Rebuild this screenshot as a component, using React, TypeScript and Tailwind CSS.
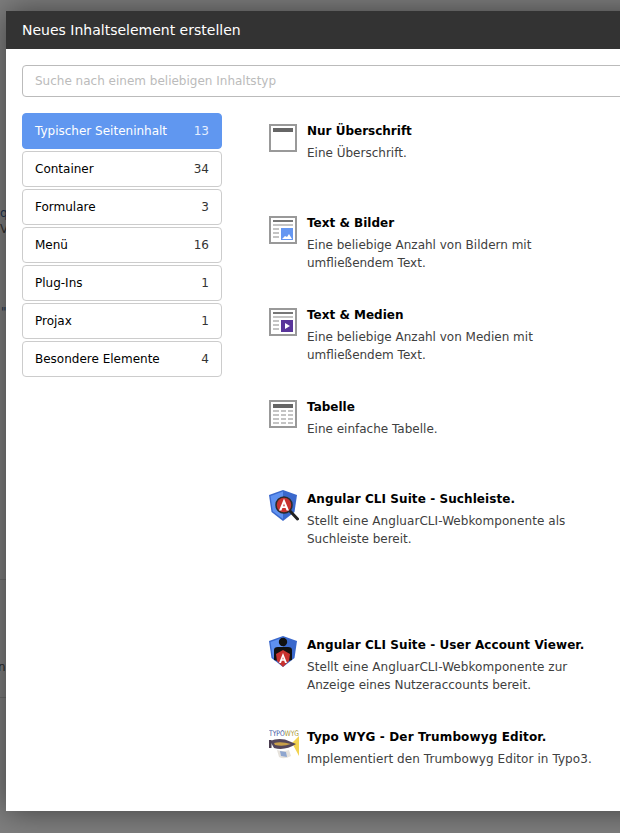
const CATEGORIES = [
  { label: 'Typischer Seiteninhalt', count: 13, active: true },
  { label: 'Container', count: 34 },
  { label: 'Formulare', count: 3 },
  { label: 'Menü', count: 16 },
  { label: 'Plug-Ins', count: 1 },
  { label: 'Projax', count: 1 },
  { label: 'Besondere Elemente', count: 4 },
];

function IconFrame({ children }: { children?: React.ReactNode }) {
  return (
    <svg width="28" height="28" viewBox="0 0 28 28" shapeRendering="crispEdges" className="mt-0.5">
      <rect x="1" y="1" width="26" height="26" fill="#fff" stroke="#999" strokeWidth="2" />
      {children}
    </svg>
  );
}

function HeaderIcon() {
  return (
    <IconFrame>
      <rect x="4" y="4" width="20" height="4" fill="#666" />
    </IconFrame>
  );
}

function TextLines() {
  return (
    <>
      <rect x="4" y="4" width="20" height="2" fill="#777" />
      <rect x="4" y="8" width="20" height="2" fill="#c4c4c4" />
      <rect x="4" y="12" width="6" height="2" fill="#c4c4c4" />
      <rect x="4" y="16" width="6" height="2" fill="#c4c4c4" />
      <rect x="4" y="20" width="6" height="2" fill="#c4c4c4" />
    </>
  );
}

function TextPicIcon() {
  return (
    <IconFrame>
      <TextLines />
      <rect x="12" y="12" width="12" height="12" fill="#6597f2" />
      <path d="M13 23l3-3 2 1 2-3 3 5z" fill="#fff" shapeRendering="auto" />
    </IconFrame>
  );
}

function TextMediaIcon() {
  return (
    <IconFrame>
      <TextLines />
      <rect x="12" y="12" width="12" height="12" fill="#59359a" />
      <path d="M16 15l5 3-5 3z" fill="#fff" shapeRendering="auto" />
    </IconFrame>
  );
}

function TableIcon() {
  return (
    <IconFrame>
      <rect x="4" y="4" width="20" height="4" fill="#666" />
      {[10, 14, 18, 22].map((y) => (
        <g key={y}>
          <rect x="4" y={y} width="6" height="2" fill="#c4c4c4" />
          <rect x="12" y={y} width="5" height="2" fill="#c4c4c4" />
          <rect x="19" y={y} width="5" height="2" fill="#c4c4c4" />
        </g>
      ))}
    </IconFrame>
  );
}

function AngularShield() {
  return (
    <>
      <path d="M14 0 L0 5 L2.5 22 L14 31 L25.5 22 L28 5 Z" fill="#3a68cc" />
      <path d="M14 1.5 L1.5 6 L3.8 21.3 L14 29 Z" fill="#5f91f0" />
    </>
  );
}

function AngularSearchIcon() {
  return (
    <svg width="30" height="33" viewBox="0 0 30 33">
      <AngularShield />
      <line x1="21" y1="21" x2="28.5" y2="29" stroke="#222" strokeWidth="3" strokeLinecap="round" />
      <circle cx="15" cy="15" r="8" fill="#c8322f" stroke="#2b2b2b" strokeWidth="1.5" />
      <path d="M15 8.5 L10 20.5 H12.4 L13.4 18 H16.6 L17.6 20.5 H20 Z M14.1 16.2 L15 13.5 L15.9 16.2 Z" fill="#fff" fillRule="evenodd" />
    </svg>
  );
}

function AngularUserIcon() {
  return (
    <svg width="30" height="33" viewBox="0 0 30 33">
      <AngularShield />
      <circle cx="14" cy="6" r="4.2" fill="#111" />
      <path d="M5 24 V14 Q5 11 9 11 H19 Q23 11 23 14 V24 L19 25 V18 H9 V25 Z" fill="#111" />
      <path d="M14 14 L7 18 L8 25 L14 31 L20 25 L21 18 Z" fill="#c8322f" />
      <path d="M14 17 L10 27 H12 L12.8 24.8 H15.2 L16 27 H18 Z M13.4 23.2 L14 21 L14.6 23.2 Z" fill="#fff" fillRule="evenodd" />
    </svg>
  );
}

function TrumbowygIcon() {
  return (
    <svg width="30" height="32" viewBox="0 0 30 32" className="mt-px">
      <path d="M23 14 L30 7 L30 27 Z" fill="#f2d34f" />
      <path d="M1 12 Q8 9 16 10.5 L27 15 Q16 22 5 19 Z" fill="#54465a" />
      <path d="M5 14 Q12 12 22 15 Q14 18 6 16 Z" fill="#c9a04a" />
      <rect x="0" y="11" width="2.5" height="8" fill="#4a3d50" />
      <path d="M8 21 Q14 23 20 21 L22 27 Q15 31 10 28 Z" fill="#e6e2dc" />
      <path d="M11 22 L17 23 L18 28 L12 27 Z" fill="#8fa6cf" />
      <text x="0" y="6.5" fontSize="7.6" fontFamily="'DejaVu Sans', sans-serif" textLength="30" lengthAdjust="spacingAndGlyphs">
        <tspan fill="#2f4a9a">TYPO</tspan>
        <tspan fill="#a8962e">WYG</tspan>
      </text>
    </svg>
  );
}

const ELEMENTS = [
  { title: 'Nur Überschrift', lines: ['Eine Überschrift.'], icon: <HeaderIcon />, h: 'h-[92px]' },
  {
    title: 'Text & Bilder',
    lines: ['Eine beliebige Anzahl von Bildern mit', 'umfließendem Text.'],
    icon: <TextPicIcon />,
    h: 'h-[92px]',
  },
  {
    title: 'Text & Medien',
    lines: ['Eine beliebige Anzahl von Medien mit', 'umfließendem Text.'],
    icon: <TextMediaIcon />,
    h: 'h-[92px]',
  },
  { title: 'Tabelle', lines: ['Eine einfache Tabelle.'], icon: <TableIcon />, h: 'h-[92px]' },
  {
    title: 'Angular CLI Suite - Suchleiste.',
    lines: ['Stellt eine AngluarCLI-Webkomponente als', 'Suchleiste bereit.'],
    icon: <AngularSearchIcon />,
    h: 'h-[146px]',
    wide: 'tracking-[0.08px]',
  },
  {
    title: 'Angular CLI Suite - User Account Viewer.',
    lines: ['Stellt eine AngluarCLI-Webkomponente zur', 'Anzeige eines Nutzeraccounts bereit.'],
    icon: <AngularUserIcon />,
    h: 'h-[92px]',
    wide: 'tracking-[0.08px]',
  },
  {
    title: 'Typo WYG - Der Trumbowyg Editor.',
    lines: ['Implementiert den Trumbowyg Editor in Typo3.'],
    icon: <TrumbowygIcon />,
    h: 'h-[60px]',
    wide: 'tracking-[0.14px]',
  },
];

export default function App() {
  return (
    <div className="relative h-[833px] w-[620px] overflow-hidden bg-[#7f7f7f] font-['DejaVu_Sans',sans-serif]">
      {/* page behind the backdrop */}
      <div className="absolute left-0 top-[205px] text-xs leading-4 text-[#1c3350]">
        q
        <br />
        <span className="text-[#333]">V</span>
      </div>
      <div className="absolute left-[1px] top-[305px] text-xs leading-[14px] text-[#1c3350]">"</div>
      <div className="absolute left-0 top-[579px] h-px w-[6px] bg-[#6e6e6e]" />
      <div className="absolute left-[-2px] top-[660px] text-xs leading-[14px] text-[#2a2a2a]">n</div>
      <div className="absolute left-0 top-[697px] h-px w-[6px] bg-[#6e6e6e]" />

      <div className="absolute left-[6px] top-[11px] flex h-[800px] w-[700px] flex-col bg-white shadow-[0_0_30px_rgba(0,0,0,0.5)]">
        <div className="flex h-[38px] shrink-0 items-center bg-[#333] px-4 text-sm text-white">
          Neues Inhaltselement erstellen
        </div>
        <div className="px-4 pt-4">
          <input
            readOnly
            placeholder="Suche nach einem beliebigen Inhaltstyp"
            className="h-8 w-full rounded-sm border border-[#bbb] bg-white px-3 text-xs text-[#333] outline-none placeholder:text-[#bbb]"
          />
          <div className="mt-4 flex">
            <div className="flex w-[200px] shrink-0 flex-col gap-0.5">
              {CATEGORIES.map((cat) => (
                <div
                  key={cat.label}
                  className={
                    cat.active
                      ? 'flex h-9 items-center justify-between rounded border border-[#6097f0] bg-[#6097f0] px-3 text-xs text-white'
                      : 'flex h-9 items-center justify-between rounded border border-[#ccc] bg-white px-3 text-xs text-black'
                  }
                >
                  <span>{cat.label}</span>
                  <span className={cat.active ? 'text-[#e4eeff]' : 'text-[#333]'}>{cat.count}</span>
                </div>
              ))}
            </div>
            <div className="ml-[47px] flex flex-col pt-[9px]">
              {ELEMENTS.map((el) => (
                <div key={el.title} className={`flex ${el.h}`}>
                  <div className="w-[38px] shrink-0">{el.icon}</div>
                  <div>
                    <div className={`text-xs font-bold leading-[18px] text-black ${el.wide ?? ''}`}>{el.title}</div>
                    <div className="mt-1 text-xs leading-[18px] text-[#404040]">
                      {el.lines.map((line, i) => (
                        <div key={line} className={el.wide && i === 0 ? 'tracking-[0.07px]' : ''}>
                          {line}
                        </div>
                      ))}
                    </div>
                  </div>
                </div>
              ))}
            </div>
          </div>
        </div>
      </div>
    </div>
  );
}
